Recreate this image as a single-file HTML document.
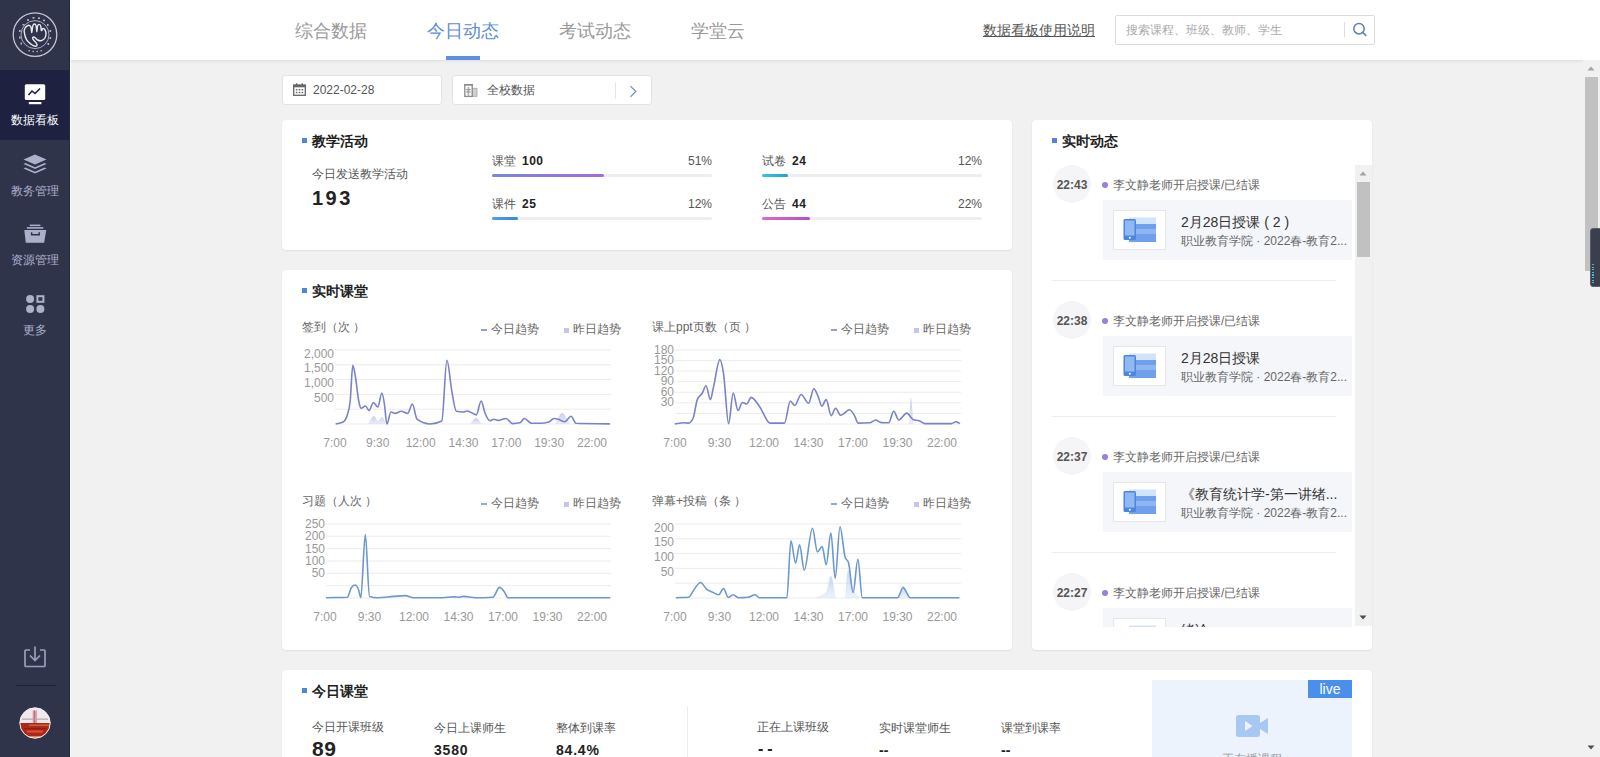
<!DOCTYPE html>
<html><head><meta charset="utf-8">
<style>
*{margin:0;padding:0;box-sizing:border-box}
html,body{width:1600px;height:757px;overflow:hidden;background:#f1f1f1;font-family:"Liberation Sans",sans-serif;color:#333}
.a{position:absolute;white-space:nowrap}
#side{position:absolute;left:0;top:0;width:70px;height:757px;background:#30344b}
#side .act{position:absolute;left:0;top:70px;width:70px;height:70px;background:#1e2240}
.snav{position:absolute;left:0;width:70px;text-align:center;font-size:12px;line-height:14px;color:#adb0cb}
#hdr{position:absolute;left:70px;top:0;width:1530px;height:60px;background:#fff;box-shadow:0 1px 3px rgba(0,0,0,.09)}
.tab{position:absolute;top:20px;font-size:18px;line-height:22px;color:#999}
.card{position:absolute;background:#fff;border-radius:4px;box-shadow:0 1px 2px rgba(0,0,0,.07),0 0 1px rgba(0,0,0,.05)}
.ttl{position:absolute;font-size:14px;line-height:16px;font-weight:bold;color:#222}
.blt{position:absolute;width:5px;height:5px;background:#4f86d6}
.lbl{font-size:12px;line-height:14px;color:#555}
.bar{position:absolute;height:3px;background:#eee;border-radius:2px}
.bar i{position:absolute;left:0;top:0;height:3px;border-radius:2px}
.ct{font-size:12px;line-height:14px;color:#666}
.leg{font-size:12px;line-height:14px;color:#666}
.ylab{font-size:12px;line-height:12px;color:#999;text-align:right}
.xlab{font-size:12px;line-height:12px;color:#999}
.tm{position:absolute;width:38px;height:38px;border-radius:50%;background:#f5f5f8;font-size:12px;font-weight:bold;color:#555;text-align:center;line-height:40px}
.dot{position:absolute;width:6px;height:6px;border-radius:50%;background:#9a7fdb}
.itm{position:absolute;width:249px;height:60px;background:#f5f6fa}
.thumb{position:absolute;left:10px;top:10px;width:53px;height:40px;background:#fff;border:1px solid #e6e6e6}
.it1{position:absolute;left:78px;top:14px;font-size:14px;line-height:16px;color:#333}
.it2{position:absolute;left:78px;top:33.5px;font-size:12px;line-height:14px;color:#666}
.stl{font-size:12px;line-height:14px;color:#555}
.sv{font-weight:bold;color:#222}
</style></head><body>

<!-- SIDEBAR -->
<div id="side">
  <svg class="a" style="left:12px;top:12px" width="46" height="46" viewBox="0 0 46 46">
    <circle cx="23" cy="22.6" r="21.8" fill="none" stroke="#c4c6d4" stroke-width="1.3"/>
    <circle cx="23" cy="22.6" r="14" fill="none" stroke="#b9bccb" stroke-width="0.9"/>
    <path d="M12.2,19.8 C11.9,17.9 12.4,17.5 12.9,16.5 C13.4,15.5 14.5,14.4 15.2,13.9 C15.9,13.4 16.6,13.1 17.2,13.3 C17.8,13.5 18.6,14.0 19.0,15.2 C19.4,16.4 19.5,20.7 19.8,20.5 C20.1,20.3 20.4,15.3 20.8,13.9 C21.2,12.5 21.8,12.0 22.4,12.0 C22.9,12.0 23.7,12.6 24.1,13.9 C24.5,15.2 24.6,19.8 24.8,19.8 C25.1,19.8 25.2,15.1 25.6,13.9 C26.0,12.7 26.6,12.4 27.1,12.4 C27.6,12.4 28.3,12.9 28.7,13.9 C29.1,14.9 29.0,18.1 29.4,18.5 C29.8,18.9 30.4,16.6 31.0,16.5 C31.6,16.4 32.5,16.9 33.0,17.8 C33.5,18.7 34.0,20.4 34.0,21.8 C34.0,23.2 33.5,25.2 32.7,26.4 C31.9,27.5 30.2,28.4 29.0,28.7 C27.8,29.0 26.7,28.5 25.7,28.0 C24.7,27.5 23.9,26.2 23.1,25.7 C22.3,25.2 21.5,24.9 21.1,25.1 C20.7,25.3 20.4,26.1 20.8,27.0 C21.2,27.9 23.1,29.4 23.8,30.4 C24.5,31.4 25.2,32.4 25.1,33.0 C25.0,33.6 24.1,34.4 23.1,34.3 C22.1,34.2 20.5,33.4 19.1,32.3 C17.7,31.2 15.7,29.8 14.5,27.7 C13.3,25.6 12.5,21.7 12.2,19.8Z" fill="none" stroke="#e9eaf0" stroke-width="1.4" stroke-linejoin="round"/>
    
    <g fill="#b4b7c8"><rect x="10.5" y="12" width="2" height="1.6"/><rect x="15" y="7.2" width="2" height="1.6"/><rect x="20.5" y="5" width="2" height="1.6"/><rect x="26" y="5.4" width="2" height="1.6"/><rect x="31" y="7.6" width="2" height="1.6"/><rect x="35" y="12" width="1.6" height="2"/><rect x="37.5" y="18" width="1.6" height="2"/><rect x="37.5" y="25" width="1.6" height="2"/><rect x="35.5" y="31" width="1.6" height="2"/><rect x="7" y="18" width="1.6" height="2"/><rect x="7" y="24.5" width="1.6" height="2"/><rect x="8.5" y="30.5" width="1.6" height="2"/><rect x="16.5" y="38" width="1.4" height="1.4"/><rect x="20.5" y="38.8" width="1.4" height="1.4"/><rect x="24.5" y="38.8" width="1.4" height="1.4"/><rect x="28.5" y="38" width="1.4" height="1.4"/></g>
  </svg>
  <div class="act"></div>
  <svg class="a" style="left:24px;top:84px" width="22" height="21" viewBox="0 0 22 21">
    <rect x="0.8" y="0.2" width="20.4" height="15.8" rx="1.5" fill="#fff"/>
    <path d="M4.5,11 L8,7 L11,9.5 L16,4.5" fill="none" stroke="#1e2240" stroke-width="1.6"/>
    <rect x="4.8" y="18" width="12.6" height="2.2" fill="#fff"/>
  </svg>
  <div class="snav" style="top:113px;color:#fff">数据看板</div>

  <svg class="a" style="left:23px;top:154px" width="24" height="20" viewBox="0 0 24 20">
    <path d="M12,0.5 L23.5,5.5 L12,10.5 L0.5,5.5 Z" fill="#adb0cb"/>
    <path d="M2.5,9 L12,13.2 L21.5,9 L23.5,10 L12,15 L0.5,10 Z" fill="#adb0cb"/>
    <path d="M2.5,13.5 L12,17.7 L21.5,13.5 L23.5,14.5 L12,19.5 L0.5,14.5 Z" fill="#adb0cb"/>
  </svg>
  <div class="snav" style="top:184px">教务管理</div>

  <svg class="a" style="left:24px;top:224px" width="23" height="20" viewBox="0 0 23 20">
    <rect x="5.8" y="0.6" width="10.6" height="1.5" fill="#adb0cb"/>
    <rect x="2.9" y="3.1" width="16.4" height="1.6" fill="#adb0cb"/>
    <path d="M0.3,6.1 L22.3,6.1 L20.1,18.8 L1.8,18.8 Z" fill="#adb0cb"/>
    <path d="M7.6,8.3 L7.6,10.7 L15.2,10.7 L15.2,8.3" fill="none" stroke="#30344b" stroke-width="1.5"/>
  </svg>
  <div class="snav" style="top:253px">资源管理</div>

  <svg class="a" style="left:25px;top:294px" width="21" height="21" viewBox="0 0 21 21">
    <circle cx="5.1" cy="5" r="4" fill="#adb0cb"/>
    <rect x="11.4" y="1.2" width="8" height="7.6" fill="#adb0cb"/>
    <rect x="13.4" y="3.2" width="4" height="3.6" fill="#30344b"/>
    <circle cx="5.1" cy="15.1" r="4" fill="#adb0cb"/>
    <circle cx="15.4" cy="15.1" r="4" fill="#adb0cb"/>
  </svg>
  <div class="snav" style="top:323px">更多</div>

  <svg class="a" style="left:24px;top:646px" width="22" height="22" viewBox="0 0 22 22">
    <path d="M6,4 L2,4 Q1,4 1,5 L1,19.5 Q1,20.5 2,20.5 L20,20.5 Q21,20.5 21,19.5 L21,5 Q21,4 20,4 L16,4" fill="none" stroke="#9a9ebb" stroke-width="1.7"/>
    <path d="M11,0.5 L11,14 M6,9.5 L11,14.5 L16,9.5" fill="none" stroke="#9a9ebb" stroke-width="1.7"/>
  </svg>
  <div class="a" style="left:16px;top:685px;width:40px;height:1px;background:#1f2338"></div>
  <svg class="a" style="left:19px;top:707px" width="32" height="32" viewBox="0 0 32 32">
    <defs><clipPath id="av"><circle cx="16" cy="16" r="15.2"/></clipPath></defs>
    <g clip-path="url(#av)">
      <rect width="32" height="32" fill="#efe9ec"/>
      <rect x="3" y="11.5" width="26" height="1.3" fill="#b7acb0"/>
      <rect x="13.7" y="3.5" width="4.3" height="13" fill="#d9a0aa"/>
      <rect x="14.8" y="3.5" width="1.2" height="13" fill="#c0707e"/>
      <rect y="16" width="32" height="16" fill="#ad2818"/>
      <rect x="10" y="17.5" width="20" height="1.6" fill="#c0683a"/>
      <rect x="5" y="21" width="22" height="1.2" fill="#8e1e12"/>
      <rect x="8" y="23.5" width="16" height="2" fill="#e0503a"/>
      <rect y="29" width="32" height="3" fill="#d88a5a"/>
    </g>
    <circle cx="16" cy="16" r="15.2" fill="none" stroke="#f4eef0" stroke-width="1"/>
  </svg>
</div>

<div class="a" style="left:69px;top:0;width:1px;height:757px;background:#262a40"></div>
<div class="a" style="left:70px;top:60px;width:1px;height:697px;background:#f9f9f9"></div>
<!-- HEADER -->
<div id="hdr"></div>
<div class="tab" style="left:295px">综合数据</div>
<div class="tab" style="left:427px;color:#5b8cd8">今日动态</div>
<div class="a" style="left:446px;top:56px;width:34px;height:4px;background:#5b8fe0"></div>
<div class="tab" style="left:559px">考试动态</div>
<div class="tab" style="left:691px">学堂云</div>
<div class="a" style="left:983px;top:22px;font-size:14px;line-height:16px;color:#555;text-decoration:underline">数据看板使用说明</div>
<div class="a" style="left:1115px;top:15px;width:260px;height:30px;border:1px solid #dcdcdc;border-radius:2px;background:#fff"></div>
<div class="a" style="left:1126px;top:23px;font-size:12px;line-height:14px;color:#aaa">搜索课程、班级、教师、学生</div>
<div class="a" style="left:1344px;top:22px;width:1px;height:15px;background:#ddd"></div>
<svg class="a" style="left:1352px;top:22px" width="16" height="16" viewBox="0 0 16 16">
  <circle cx="7" cy="6.7" r="5.2" fill="none" stroke="#5c80ad" stroke-width="1.5"/>
  <path d="M10.8,10.5 L14.3,13.9" stroke="#5c80ad" stroke-width="1.6"/>
</svg>

<!-- FILTERS -->
<div class="a" style="left:282px;top:75px;width:160px;height:30px;border:1px solid #e3e3e3;border-radius:3px;background:#fff"></div>
<svg class="a" style="left:293px;top:83px" width="13" height="13" viewBox="0 0 13 13">
  <rect x="0.7" y="2" width="11.6" height="10.3" fill="none" stroke="#666" stroke-width="1.3"/>
  <rect x="0.7" y="2" width="11.6" height="2.3" fill="#666"/>
  <rect x="3" y="0.3" width="1.4" height="3" fill="#666"/><rect x="8.6" y="0.3" width="1.4" height="3" fill="#666"/>
  <g fill="#666"><rect x="2.8" y="6" width="1.6" height="1.4"/><rect x="5.7" y="6" width="1.6" height="1.4"/><rect x="8.6" y="6" width="1.6" height="1.4"/><rect x="2.8" y="8.8" width="1.6" height="1.4"/><rect x="5.7" y="8.8" width="1.6" height="1.4"/><rect x="8.6" y="8.8" width="1.6" height="1.4"/></g>
</svg>
<div class="a" style="left:313px;top:83px;font-size:12px;line-height:14px;color:#555">2022-02-28</div>
<div class="a" style="left:452px;top:75px;width:200px;height:30px;border:1px solid #e3e3e3;border-radius:3px;background:#fff"></div>
<svg class="a" style="left:463px;top:83px" width="15" height="15" viewBox="0 0 15 15">
  <rect x="9" y="5.3" width="5" height="8" fill="#d0d0d0" stroke="#aaa" stroke-width="0.9"/>
  <rect x="1.8" y="1.6" width="7.4" height="11.8" fill="#fff" stroke="#8a8a8a" stroke-width="1.3"/>
  <rect x="1.2" y="1" width="8.6" height="1.6" fill="#8a8a8a"/>
  <rect x="4.6" y="4" width="1.6" height="9.4" fill="#b0b0b0"/>
  <rect x="3.2" y="6" width="4.4" height="1.2" fill="#999"/>
  <rect x="3.2" y="8.3" width="4.4" height="1.2" fill="#999"/>
</svg>
<div class="a" style="left:487px;top:83px;font-size:12px;line-height:14px;color:#555">全校数据</div>
<div class="a" style="left:615px;top:82px;width:1px;height:17px;background:#e5e5e5"></div>
<svg class="a" style="left:629px;top:85px" width="9" height="13" viewBox="0 0 9 13">
  <path d="M1.5,1.2 L6.8,6.5 L1.5,11.8" fill="none" stroke="#6a8ad0" stroke-width="1.2"/>
</svg>

<!-- CARD: 教学活动 -->
<div class="card" style="left:282px;top:120px;width:730px;height:130px"></div>
<div class="blt" style="left:302px;top:138px"></div>
<div class="ttl" style="left:312px;top:133px">教学活动</div>
<div class="a lbl" style="left:312px;top:167px">今日发送教学活动</div>
<div class="a" style="left:312px;top:187px;font-size:20px;line-height:22px;font-weight:bold;color:#222;letter-spacing:2.5px">193</div>

<div class="a lbl" style="left:492px;top:154px">课堂<b style="color:#222;margin-left:6px;letter-spacing:0.5px">100</b></div>
<div class="a lbl" style="left:682px;top:154px;width:30px;text-align:right">51%</div>
<div class="bar" style="left:492px;top:174px;width:220px"><i style="width:112px;background:linear-gradient(90deg,#7a86d8,#a36ae0)"></i></div>
<div class="a lbl" style="left:492px;top:197px">课件<b style="color:#222;margin-left:6px;letter-spacing:0.5px">25</b></div>
<div class="a lbl" style="left:682px;top:197px;width:30px;text-align:right">12%</div>
<div class="bar" style="left:492px;top:217px;width:220px"><i style="width:26px;background:linear-gradient(90deg,#4aa3e6,#3a86d9)"></i></div>

<div class="a lbl" style="left:762px;top:154px">试卷<b style="color:#222;margin-left:6px;letter-spacing:0.5px">24</b></div>
<div class="a lbl" style="left:952px;top:154px;width:30px;text-align:right">12%</div>
<div class="bar" style="left:762px;top:174px;width:220px"><i style="width:26px;background:linear-gradient(90deg,#3fc2d8,#2b9dcc)"></i></div>
<div class="a lbl" style="left:762px;top:197px">公告<b style="color:#222;margin-left:6px;letter-spacing:0.5px">44</b></div>
<div class="a lbl" style="left:952px;top:197px;width:30px;text-align:right">22%</div>
<div class="bar" style="left:762px;top:217px;width:220px"><i style="width:48px;background:linear-gradient(90deg,#e06bbf,#b14fd4)"></i></div>

<!-- CARD: 实时课堂 -->
<div class="card" style="left:282px;top:270px;width:730px;height:380px"></div>
<div class="blt" style="left:302px;top:288px"></div>
<div class="ttl" style="left:312px;top:283px">实时课堂</div>
<div class="a ct" style="left:302px;top:320px">签到（次 ）</div>
<div class="a" style="left:481px;top:329px;width:6px;height:2px;background:#7a82c8;opacity:.8"></div>
<div class="a leg" style="left:491px;top:322px">今日趋势</div>
<div class="a" style="left:564px;top:328px;width:5px;height:5px;background:#c3c7e6"></div>
<div class="a leg" style="left:573px;top:322px">昨日趋势</div>
<svg class="a" style="left:0;top:0" width="1600" height="757"><defs><linearGradient id="gc1" x1="0" y1="0" x2="0" y2="1"><stop offset="0" stop-color="#b9bde8" stop-opacity=".75"/><stop offset="1" stop-color="#b9bde8" stop-opacity=".25"/></linearGradient></defs><line x1="335.0" y1="350.0" x2="611.0" y2="350.0" stroke="#ececec" stroke-width="1"/><line x1="335.0" y1="364.8" x2="611.0" y2="364.8" stroke="#ececec" stroke-width="1"/><line x1="335.0" y1="379.6" x2="611.0" y2="379.6" stroke="#ececec" stroke-width="1"/><line x1="335.0" y1="394.4" x2="611.0" y2="394.4" stroke="#ececec" stroke-width="1"/><line x1="335.0" y1="409.2" x2="611.0" y2="409.2" stroke="#ececec" stroke-width="1"/><line x1="335.0" y1="424.0" x2="611.0" y2="424.0" stroke="#ececec" stroke-width="1"/><path d="M368.0,424.0 C370.0,421.3 372.0,416.0 374.0,416.0 C375.3,416.0 376.7,421.0 378.0,421.0 C379.3,421.0 380.7,417.0 382.0,417.0 C383.3,417.0 384.7,421.7 386.0,424.0" fill="url(#gc1)"/><path d="M470.0,424.0 C472.0,422.0 474.0,418.0 476.0,418.0 C478.0,418.0 480.0,422.0 482.0,424.0" fill="url(#gc1)"/><path d="M555.0,424.0 C557.3,420.3 559.7,413.0 562.0,413.0 C564.7,413.0 567.3,420.3 570.0,424.0" fill="url(#gc1)"/><path d="M335.7,424.0 C338.1,423.3 340.6,423.3 343.0,422.0 C344.4,421.2 345.9,419.6 347.3,414.9 C348.3,411.7 349.2,410.2 350.2,401.0 C351.1,392.8 351.9,365.4 352.8,365.4 C353.6,365.4 354.5,371.5 355.3,376.0 C356.5,382.7 357.8,397.1 359.0,402.5 C359.7,405.5 360.4,408.3 361.1,408.3 C362.6,408.3 364.0,406.0 365.5,406.0 C366.7,406.0 367.8,410.5 369.0,410.5 C370.5,410.5 372.0,402.5 373.5,402.5 C374.9,402.5 376.4,407.0 377.8,407.0 C379.2,407.0 380.5,393.0 381.9,393.0 C382.7,393.0 383.6,398.8 384.4,404.0 C385.2,409.2 386.1,424.0 386.9,424.0 C388.3,424.0 389.6,412.0 391.0,412.0 C392.4,412.0 393.9,413.4 395.3,413.4 C397.2,413.4 399.2,411.2 401.1,411.2 C403.3,411.2 405.4,413.4 407.6,413.4 C409.2,413.4 410.8,404.0 412.4,404.0 C413.9,404.0 415.5,418.1 417.0,419.2 C421.4,422.4 425.8,424.0 430.2,424.0 C434.1,424.0 437.9,423.0 441.8,421.0 C443.5,420.1 445.2,360.3 446.9,360.3 C448.6,360.3 450.3,383.4 452.0,392.3 C453.4,399.8 454.9,410.9 456.3,411.2 C458.5,411.7 460.8,412.0 463.0,412.0 C464.5,412.0 465.9,411.0 467.4,411.0 C470.3,411.0 473.3,414.9 476.2,414.9 C477.9,414.9 479.5,401.0 481.2,401.0 C482.4,401.0 483.7,409.6 484.9,412.7 C486.6,416.9 488.3,420.7 490.0,420.7 C491.2,420.7 492.4,419.2 493.6,419.2 C495.1,419.2 496.5,420.4 498.0,420.4 C500.7,420.4 503.3,418.5 506.0,418.5 C508.2,418.5 510.3,423.6 512.5,423.6 C514.9,423.6 517.4,423.3 519.8,422.8 C521.3,422.5 522.9,418.5 524.4,418.5 C526.7,418.5 529.1,423.3 531.4,423.3 C534.3,423.3 537.2,423.3 540.1,423.3 C543.0,423.3 545.9,422.9 548.8,422.1 C550.5,421.6 552.2,418.5 553.9,418.5 C555.4,418.5 556.8,418.8 558.3,419.2 C560.5,419.8 562.6,421.8 564.8,421.8 C566.9,421.8 568.9,416.3 571.0,416.3 C572.7,416.3 574.5,423.2 576.2,423.3 C587.4,423.7 598.7,423.7 609.9,423.9" fill="none" stroke="#7a82c8" stroke-width="1.6" stroke-linejoin="round"/></svg>
<div class="a ylab" style="left:294px;top:347.5px;width:40px">2,000</div>
<div class="a ylab" style="left:294px;top:362.3px;width:40px">1,500</div>
<div class="a ylab" style="left:294px;top:377.1px;width:40px">1,000</div>
<div class="a ylab" style="left:294px;top:391.9px;width:40px">500</div>
<div class="a xlab" style="left:335.0px;top:437px;width:40px;margin-left:-20px;text-align:center">7:00</div>
<div class="a xlab" style="left:377.8px;top:437px;width:40px;margin-left:-20px;text-align:center">9:30</div>
<div class="a xlab" style="left:420.7px;top:437px;width:40px;margin-left:-20px;text-align:center">12:00</div>
<div class="a xlab" style="left:463.5px;top:437px;width:40px;margin-left:-20px;text-align:center">14:30</div>
<div class="a xlab" style="left:506.3px;top:437px;width:40px;margin-left:-20px;text-align:center">17:00</div>
<div class="a xlab" style="left:549.2px;top:437px;width:40px;margin-left:-20px;text-align:center">19:30</div>
<div class="a xlab" style="left:592.0px;top:437px;width:40px;margin-left:-20px;text-align:center">22:00</div>
<div class="a ct" style="left:652px;top:320px">课上ppt页数（页 ）</div>
<div class="a" style="left:831px;top:329px;width:6px;height:2px;background:#7a82c8;opacity:.8"></div>
<div class="a leg" style="left:841px;top:322px">今日趋势</div>
<div class="a" style="left:914px;top:328px;width:5px;height:5px;background:#c3c7e6"></div>
<div class="a leg" style="left:923px;top:322px">昨日趋势</div>
<svg class="a" style="left:0;top:0" width="1600" height="757"><defs><linearGradient id="gc2" x1="0" y1="0" x2="0" y2="1"><stop offset="0" stop-color="#b9bde8" stop-opacity=".75"/><stop offset="1" stop-color="#b9bde8" stop-opacity=".25"/></linearGradient></defs><line x1="675.0" y1="350.0" x2="961.0" y2="350.0" stroke="#ececec" stroke-width="1"/><line x1="675.0" y1="360.6" x2="961.0" y2="360.6" stroke="#ececec" stroke-width="1"/><line x1="675.0" y1="371.1" x2="961.0" y2="371.1" stroke="#ececec" stroke-width="1"/><line x1="675.0" y1="381.7" x2="961.0" y2="381.7" stroke="#ececec" stroke-width="1"/><line x1="675.0" y1="392.3" x2="961.0" y2="392.3" stroke="#ececec" stroke-width="1"/><line x1="675.0" y1="402.9" x2="961.0" y2="402.9" stroke="#ececec" stroke-width="1"/><line x1="675.0" y1="413.4" x2="961.0" y2="413.4" stroke="#ececec" stroke-width="1"/><line x1="675.0" y1="424.0" x2="961.0" y2="424.0" stroke="#ececec" stroke-width="1"/><path d="M909.0,424.0 C909.7,415.3 910.3,398.0 911.0,398.0 C911.8,398.0 912.7,415.3 913.5,424.0" fill="url(#gc2)"/><path d="M674.8,424.0 C677.7,423.6 680.6,422.8 683.5,422.8 C685.2,422.8 686.9,423.1 688.6,423.1 C690.1,423.1 691.5,421.6 693.0,418.5 C694.4,415.5 695.9,403.3 697.3,399.6 C699.0,395.2 700.7,395.9 702.4,393.0 C703.6,391.0 704.8,385.8 706.0,385.8 C707.5,385.8 708.9,399.6 710.4,399.6 C711.4,399.6 712.3,392.0 713.3,388.0 C715.5,379.0 717.7,359.6 719.9,359.6 C721.1,359.6 722.3,365.8 723.5,373.4 C725.2,384.1 726.9,423.6 728.6,423.6 C730.1,423.6 731.7,393.0 733.2,393.0 C734.8,393.0 736.4,410.5 738.0,410.5 C739.5,410.5 740.9,402.5 742.4,402.5 C743.8,402.5 745.3,404.0 746.7,404.0 C748.2,404.0 749.6,397.4 751.1,397.4 C754.0,397.4 756.9,403.1 759.8,406.9 C763.2,411.4 766.6,423.1 770.0,423.1 C774.8,423.1 779.7,423.1 784.5,423.1 C786.4,423.1 788.4,401.0 790.3,401.0 C791.8,401.0 793.2,405.4 794.7,405.4 C796.9,405.4 799.0,394.5 801.2,394.5 C803.7,394.5 806.1,403.2 808.6,403.2 C810.3,403.2 812.1,388.7 813.8,388.7 C815.3,388.7 816.7,393.4 818.2,396.7 C819.4,399.4 820.6,406.1 821.8,406.1 C823.3,406.1 824.7,399.6 826.2,399.6 C827.9,399.6 829.5,415.6 831.2,415.6 C832.7,415.6 834.1,408.3 835.6,408.3 C837.3,408.3 839.0,415.3 840.7,415.3 C843.6,415.3 846.5,409.8 849.4,409.8 C851.1,409.8 852.8,412.7 854.5,415.6 C855.7,417.6 856.9,423.1 858.1,423.1 C862.0,423.1 865.9,423.0 869.8,422.8 C871.7,422.7 873.7,420.0 875.6,420.0 C877.5,420.0 879.5,422.5 881.4,422.6 C883.8,422.7 886.3,422.8 888.7,422.8 C890.4,422.8 892.0,411.2 893.7,411.2 C895.4,411.2 897.1,420.0 898.8,420.0 C901.5,420.0 904.1,413.1 906.8,413.1 C909.0,413.1 911.2,418.9 913.4,419.7 C915.3,420.4 917.3,420.0 919.2,420.7 C921.1,421.3 923.1,423.6 925.0,423.6 C933.7,423.6 942.5,423.6 951.2,423.6 C952.9,423.6 954.6,421.7 956.3,421.7 C957.5,421.7 958.7,423.0 959.9,423.6" fill="none" stroke="#7a82c8" stroke-width="1.6" stroke-linejoin="round"/></svg>
<div class="a ylab" style="left:634px;top:343.5px;width:40px">180</div>
<div class="a ylab" style="left:634px;top:354.1px;width:40px">150</div>
<div class="a ylab" style="left:634px;top:364.6px;width:40px">120</div>
<div class="a ylab" style="left:634px;top:375.2px;width:40px">90</div>
<div class="a ylab" style="left:634px;top:385.8px;width:40px">60</div>
<div class="a ylab" style="left:634px;top:396.4px;width:40px">30</div>
<div class="a xlab" style="left:675.0px;top:437px;width:40px;margin-left:-20px;text-align:center">7:00</div>
<div class="a xlab" style="left:719.5px;top:437px;width:40px;margin-left:-20px;text-align:center">9:30</div>
<div class="a xlab" style="left:764.0px;top:437px;width:40px;margin-left:-20px;text-align:center">12:00</div>
<div class="a xlab" style="left:808.5px;top:437px;width:40px;margin-left:-20px;text-align:center">14:30</div>
<div class="a xlab" style="left:853.0px;top:437px;width:40px;margin-left:-20px;text-align:center">17:00</div>
<div class="a xlab" style="left:897.5px;top:437px;width:40px;margin-left:-20px;text-align:center">19:30</div>
<div class="a xlab" style="left:942.0px;top:437px;width:40px;margin-left:-20px;text-align:center">22:00</div>
<div class="a ct" style="left:302px;top:494px">习题（人次 ）</div>
<div class="a" style="left:481px;top:503px;width:6px;height:2px;background:#6c98d0;opacity:.8"></div>
<div class="a leg" style="left:491px;top:496px">今日趋势</div>
<div class="a" style="left:564px;top:502px;width:5px;height:5px;background:#c3c7e6"></div>
<div class="a leg" style="left:573px;top:496px">昨日趋势</div>
<svg class="a" style="left:0;top:0" width="1600" height="757"><defs><linearGradient id="gc3" x1="0" y1="0" x2="0" y2="1"><stop offset="0" stop-color="#b6cdee" stop-opacity=".75"/><stop offset="1" stop-color="#b6cdee" stop-opacity=".25"/></linearGradient></defs><line x1="326.0" y1="524.0" x2="611.0" y2="524.0" stroke="#ececec" stroke-width="1"/><line x1="326.0" y1="536.3" x2="611.0" y2="536.3" stroke="#ececec" stroke-width="1"/><line x1="326.0" y1="548.7" x2="611.0" y2="548.7" stroke="#ececec" stroke-width="1"/><line x1="326.0" y1="561.0" x2="611.0" y2="561.0" stroke="#ececec" stroke-width="1"/><line x1="326.0" y1="573.3" x2="611.0" y2="573.3" stroke="#ececec" stroke-width="1"/><line x1="326.0" y1="585.7" x2="611.0" y2="585.7" stroke="#ececec" stroke-width="1"/><line x1="326.0" y1="598.0" x2="611.0" y2="598.0" stroke="#ececec" stroke-width="1"/><path d="M325.9,597.7 C333.0,597.5 340.2,597.5 347.3,597.2 C348.6,597.1 350.0,589.6 351.3,587.7 C352.5,585.9 353.8,585.0 355.0,585.0 C356.1,585.0 357.3,586.4 358.4,589.3 C359.2,591.3 360.0,597.7 360.8,597.7 C362.3,597.7 363.8,534.6 365.3,534.6 C366.7,534.6 368.1,595.9 369.5,596.4 C372.2,597.3 374.8,597.7 377.5,597.7 C382.8,597.7 388.0,596.8 393.3,596.4 C397.3,596.1 401.2,595.6 405.2,595.6 C408.1,595.6 411.0,597.7 413.9,597.7 C423.4,597.7 433.0,597.7 442.5,597.7 C446.2,597.7 449.9,596.9 453.6,596.9 C455.6,596.9 457.5,597.2 459.5,597.2 C460.8,597.2 462.2,596.4 463.5,596.4 C467.5,596.4 471.4,597.7 475.4,597.7 C481.2,597.7 487.0,597.5 492.8,597.2 C495.0,597.1 497.3,587.4 499.5,587.4 C501.2,587.4 503.0,590.1 504.7,592.5 C505.8,594.0 506.8,597.7 507.9,597.7 C542.0,597.7 576.1,597.7 610.2,597.7" fill="none" stroke="#6c98d0" stroke-width="1.6" stroke-linejoin="round"/></svg>
<div class="a ylab" style="left:285px;top:518.0px;width:40px">250</div>
<div class="a ylab" style="left:285px;top:530.3px;width:40px">200</div>
<div class="a ylab" style="left:285px;top:542.7px;width:40px">150</div>
<div class="a ylab" style="left:285px;top:555.0px;width:40px">100</div>
<div class="a ylab" style="left:285px;top:567.3px;width:40px">50</div>
<div class="a xlab" style="left:325.0px;top:611px;width:40px;margin-left:-20px;text-align:center">7:00</div>
<div class="a xlab" style="left:369.5px;top:611px;width:40px;margin-left:-20px;text-align:center">9:30</div>
<div class="a xlab" style="left:414.0px;top:611px;width:40px;margin-left:-20px;text-align:center">12:00</div>
<div class="a xlab" style="left:458.5px;top:611px;width:40px;margin-left:-20px;text-align:center">14:30</div>
<div class="a xlab" style="left:503.0px;top:611px;width:40px;margin-left:-20px;text-align:center">17:00</div>
<div class="a xlab" style="left:547.5px;top:611px;width:40px;margin-left:-20px;text-align:center">19:30</div>
<div class="a xlab" style="left:592.0px;top:611px;width:40px;margin-left:-20px;text-align:center">22:00</div>
<div class="a ct" style="left:652px;top:494px">弹幕+投稿（条 ）</div>
<div class="a" style="left:831px;top:503px;width:6px;height:2px;background:#6c98d0;opacity:.8"></div>
<div class="a leg" style="left:841px;top:496px">今日趋势</div>
<div class="a" style="left:914px;top:502px;width:5px;height:5px;background:#c3c7e6"></div>
<div class="a leg" style="left:923px;top:496px">昨日趋势</div>
<svg class="a" style="left:0;top:0" width="1600" height="757"><defs><linearGradient id="gc4" x1="0" y1="0" x2="0" y2="1"><stop offset="0" stop-color="#b6cdee" stop-opacity=".75"/><stop offset="1" stop-color="#b6cdee" stop-opacity=".25"/></linearGradient></defs><line x1="675.0" y1="524.0" x2="961.0" y2="524.0" stroke="#ececec" stroke-width="1"/><line x1="675.0" y1="538.8" x2="961.0" y2="538.8" stroke="#ececec" stroke-width="1"/><line x1="675.0" y1="553.6" x2="961.0" y2="553.6" stroke="#ececec" stroke-width="1"/><line x1="675.0" y1="568.4" x2="961.0" y2="568.4" stroke="#ececec" stroke-width="1"/><line x1="675.0" y1="583.2" x2="961.0" y2="583.2" stroke="#ececec" stroke-width="1"/><line x1="675.0" y1="598.0" x2="961.0" y2="598.0" stroke="#ececec" stroke-width="1"/><path d="M815.0,598.0 C818.7,596.0 822.3,596.0 826.0,592.0 C827.7,590.2 829.3,576.0 831.0,576.0 C832.7,576.0 834.3,590.7 836.0,598.0" fill="url(#gc4)"/><path d="M845.0,598.0 C846.0,588.7 847.0,570.0 848.0,570.0 C849.7,570.0 851.3,583.5 853.0,588.0 C855.3,594.3 857.7,594.7 860.0,598.0" fill="url(#gc4)"/><path d="M898.0,598.0 C899.7,594.0 901.3,586.0 903.0,586.0 C905.0,586.0 907.0,594.0 909.0,598.0" fill="url(#gc4)"/><path d="M675.9,597.7 C680.1,597.5 684.4,597.5 688.6,597.2 C690.5,597.1 692.3,591.6 694.2,589.3 C696.3,586.7 698.4,582.5 700.5,582.5 C702.6,582.5 704.7,587.7 706.8,589.3 C708.4,590.5 710.0,590.9 711.6,591.7 C714.0,592.8 716.3,594.8 718.7,594.8 C720.3,594.8 721.9,588.5 723.5,588.5 C725.1,588.5 726.7,597.5 728.3,597.5 C729.9,597.5 731.4,594.8 733.0,594.8 C734.9,594.8 736.7,597.7 738.6,597.7 C741.8,597.7 744.9,597.5 748.1,597.2 C750.5,597.0 752.8,594.8 755.2,594.8 C756.5,594.8 757.9,597.7 759.2,597.7 C768.4,597.7 777.7,597.7 786.9,597.7 C788.2,597.7 789.6,540.9 790.9,540.9 C792.5,540.9 794.0,563.1 795.6,563.1 C796.9,563.1 798.3,544.9 799.6,544.9 C801.1,544.9 802.7,570.2 804.2,570.2 C807.0,570.2 809.7,528.2 812.5,528.2 C814.1,528.2 815.8,552.0 817.4,552.0 C819.0,552.0 820.6,546.5 822.2,546.5 C823.5,546.5 824.9,564.7 826.2,564.7 C827.8,564.7 829.3,533.0 830.9,533.0 C832.3,533.0 833.8,578.2 835.2,578.2 C836.8,578.2 838.4,526.7 840.0,526.7 C841.7,526.7 843.5,552.5 845.2,557.6 C846.3,560.7 847.3,559.2 848.4,562.3 C850.0,566.9 851.5,592.5 853.1,592.5 C854.7,592.5 856.3,559.2 857.9,559.2 C859.4,559.2 860.8,597.7 862.3,597.7 C874.0,597.7 885.8,597.7 897.5,597.7 C899.4,597.7 901.2,587.7 903.1,587.7 C905.5,587.7 907.8,597.7 910.2,597.7 C926.6,597.7 943.0,597.7 959.4,597.7" fill="none" stroke="#6c98d0" stroke-width="1.6" stroke-linejoin="round"/></svg>
<div class="a ylab" style="left:634px;top:521.5px;width:40px">200</div>
<div class="a ylab" style="left:634px;top:536.3px;width:40px">150</div>
<div class="a ylab" style="left:634px;top:551.1px;width:40px">100</div>
<div class="a ylab" style="left:634px;top:565.9px;width:40px">50</div>
<div class="a xlab" style="left:675.0px;top:611px;width:40px;margin-left:-20px;text-align:center">7:00</div>
<div class="a xlab" style="left:719.5px;top:611px;width:40px;margin-left:-20px;text-align:center">9:30</div>
<div class="a xlab" style="left:764.0px;top:611px;width:40px;margin-left:-20px;text-align:center">12:00</div>
<div class="a xlab" style="left:808.5px;top:611px;width:40px;margin-left:-20px;text-align:center">14:30</div>
<div class="a xlab" style="left:853.0px;top:611px;width:40px;margin-left:-20px;text-align:center">17:00</div>
<div class="a xlab" style="left:897.5px;top:611px;width:40px;margin-left:-20px;text-align:center">19:30</div>
<div class="a xlab" style="left:942.0px;top:611px;width:40px;margin-left:-20px;text-align:center">22:00</div>

<!-- CARD: 实时动态 -->
<div class="card" style="left:1032px;top:120px;width:340px;height:530px"></div>
<div class="blt" style="left:1052px;top:138px"></div>
<div class="ttl" style="left:1062px;top:133px">实时动态</div>
<div class="a" style="left:1032px;top:165px;width:340px;height:462px;overflow:hidden">
<div class="tm" style="left:21px;top:0px">22:43</div>
<div class="dot" style="left:70px;top:17px"></div>
<div class="a" style="left:81px;top:13px;font-size:12px;line-height:14px;color:#666">李文静老师开启授课/已结课</div>
<div class="itm" style="left:71px;top:35px"><div class="thumb"><svg style="position:absolute;left:9px;top:5px" width="34" height="28" viewBox="0 0 34 28"><rect x="6" y="1.5" width="27" height="9" fill="#d3e3f9"/><rect x="6" y="8" width="27" height="18" fill="#6ea0ec"/><rect x="6" y="13" width="27" height="5" fill="#8fb6f0"/><rect x="0.5" y="3" width="12.5" height="21" rx="1.5" fill="#4d86e0"/><rect x="2" y="4.5" width="9.5" height="15" fill="#90b8f3"/><circle cx="6.8" cy="21.8" r="1" fill="#fff"/></svg></div><div class="it1">2月28日授课 ( 2 )</div><div class="it2">职业教育学院 · 2022春-教育2...</div></div>
<div class="a" style="left:20px;top:115px;width:284px;height:1px;background:#eee"></div>
<div class="tm" style="left:21px;top:136px">22:38</div>
<div class="dot" style="left:70px;top:153px"></div>
<div class="a" style="left:81px;top:149px;font-size:12px;line-height:14px;color:#666">李文静老师开启授课/已结课</div>
<div class="itm" style="left:71px;top:171px"><div class="thumb"><svg style="position:absolute;left:9px;top:5px" width="34" height="28" viewBox="0 0 34 28"><rect x="6" y="1.5" width="27" height="9" fill="#d3e3f9"/><rect x="6" y="8" width="27" height="18" fill="#6ea0ec"/><rect x="6" y="13" width="27" height="5" fill="#8fb6f0"/><rect x="0.5" y="3" width="12.5" height="21" rx="1.5" fill="#4d86e0"/><rect x="2" y="4.5" width="9.5" height="15" fill="#90b8f3"/><circle cx="6.8" cy="21.8" r="1" fill="#fff"/></svg></div><div class="it1">2月28日授课</div><div class="it2">职业教育学院 · 2022春-教育2...</div></div>
<div class="a" style="left:20px;top:251px;width:284px;height:1px;background:#eee"></div>
<div class="tm" style="left:21px;top:272px">22:37</div>
<div class="dot" style="left:70px;top:289px"></div>
<div class="a" style="left:81px;top:285px;font-size:12px;line-height:14px;color:#666">李文静老师开启授课/已结课</div>
<div class="itm" style="left:71px;top:307px"><div class="thumb"><svg style="position:absolute;left:9px;top:5px" width="34" height="28" viewBox="0 0 34 28"><rect x="6" y="1.5" width="27" height="9" fill="#d3e3f9"/><rect x="6" y="8" width="27" height="18" fill="#6ea0ec"/><rect x="6" y="13" width="27" height="5" fill="#8fb6f0"/><rect x="0.5" y="3" width="12.5" height="21" rx="1.5" fill="#4d86e0"/><rect x="2" y="4.5" width="9.5" height="15" fill="#90b8f3"/><circle cx="6.8" cy="21.8" r="1" fill="#fff"/></svg></div><div class="it1">《教育统计学-第一讲绪...</div><div class="it2">职业教育学院 · 2022春-教育2...</div></div>
<div class="a" style="left:20px;top:387px;width:284px;height:1px;background:#eee"></div>
<div class="tm" style="left:21px;top:408px">22:27</div>
<div class="dot" style="left:70px;top:425px"></div>
<div class="a" style="left:81px;top:421px;font-size:12px;line-height:14px;color:#666">李文静老师开启授课/已结课</div>
<div class="itm" style="left:71px;top:443px"><div class="thumb"><svg style="position:absolute;left:9px;top:5px" width="34" height="28" viewBox="0 0 34 28"><rect x="6" y="1.5" width="27" height="9" fill="#d3e3f9"/><rect x="6" y="8" width="27" height="18" fill="#6ea0ec"/><rect x="6" y="13" width="27" height="5" fill="#8fb6f0"/><rect x="0.5" y="3" width="12.5" height="21" rx="1.5" fill="#4d86e0"/><rect x="2" y="4.5" width="9.5" height="15" fill="#90b8f3"/><circle cx="6.8" cy="21.8" r="1" fill="#fff"/></svg></div><div class="it1">绪论</div><div class="it2">职业教育学院 · 2022春-教育2...</div></div>
<div class="a" style="left:20px;top:523px;width:284px;height:1px;background:#eee"></div>
</div>
<div class="a" style="left:1355px;top:165px;width:17px;height:461px;background:#f1f1f1"></div>
<svg class="a" style="left:1358px;top:170px" width="10" height="7" viewBox="0 0 10 7"><path d="M1.5,5.5 L5,1.5 L8.5,5.5 Z" fill="#a3a3a3"/></svg>
<div class="a" style="left:1357px;top:182px;width:13px;height:75px;background:#c1c1c1"></div>
<svg class="a" style="left:1358px;top:614px" width="10" height="7" viewBox="0 0 10 7"><path d="M1.5,1.5 L5,5.5 L8.5,1.5 Z" fill="#505050"/></svg>

<!-- CARD: 今日课堂 -->
<div class="card" style="left:282px;top:670px;width:1090px;height:120px"></div>
<div class="blt" style="left:302px;top:688px"></div>
<div class="ttl" style="left:312px;top:683px">今日课堂</div>
<div class="a stl" style="left:312px;top:720px">今日开课班级</div>
<div class="a sv" style="left:312px;top:738px;font-size:21px;line-height:22px;letter-spacing:0.5px">89</div>
<div class="a stl" style="left:434px;top:721px">今日上课师生</div>
<div class="a sv" style="left:434px;top:742px;font-size:14px;line-height:16px;letter-spacing:0.8px">3580</div>
<div class="a stl" style="left:556px;top:721px">整体到课率</div>
<div class="a sv" style="left:556px;top:742px;font-size:14px;line-height:16px;letter-spacing:0.8px">84.4%</div>
<div class="a" style="left:687px;top:706px;width:1px;height:51px;background:#eee"></div>
<div class="a stl" style="left:757px;top:720px">正在上课班级</div>
<div class="a sv" style="left:758px;top:740px;font-size:16px;line-height:18px;letter-spacing:4px">--</div>
<div class="a stl" style="left:879px;top:721px">实时课堂师生</div>
<div class="a sv" style="left:879px;top:742px;font-size:14px;line-height:16px">--</div>
<div class="a stl" style="left:1001px;top:721px">课堂到课率</div>
<div class="a sv" style="left:1001px;top:742px;font-size:14px;line-height:16px">--</div>
<div class="a" style="left:1152px;top:680px;width:200px;height:90px;background:#ecf3fd"></div>
<div class="a" style="left:1308px;top:680px;width:44px;height:18px;background:#4a8fea;color:#fff;font-size:14px;line-height:18px;text-align:center">live</div>
<svg class="a" style="left:1236px;top:715px" width="32" height="22" viewBox="0 0 32 22">
  <rect x="0" y="0" width="24" height="22" rx="2.5" fill="#a8c8f3"/>
  <path d="M24,8 L32,3 L32,19 L24,14 Z" fill="#a8c8f3"/>
  <path d="M9,6 L16.5,11 L9,16 Z" fill="#ecf3fd"/>
</svg>
<div class="a" style="left:1222px;top:752px;font-size:12px;line-height:14px;color:#999">正在播课程</div>

<!-- MAIN SCROLLBAR -->
<div class="a" style="left:1583px;top:60px;width:17px;height:697px;background:#f1f1f1"></div>
<svg class="a" style="left:1586px;top:65px" width="10" height="7" viewBox="0 0 10 7"><path d="M1.5,5.5 L5,1.5 L8.5,5.5 Z" fill="#a3a3a3"/></svg>
<div class="a" style="left:1585px;top:77px;width:13px;height:194px;background:#c1c1c1"></div>
<svg class="a" style="left:1586px;top:744px" width="10" height="7" viewBox="0 0 10 7"><path d="M1.5,1.5 L5,5.5 L8.5,1.5 Z" fill="#505050"/></svg>
<div class="a" style="left:1590px;top:228px;width:12px;height:59px;background:#3b3f4d;border:1px solid #5a5e6a;border-radius:3px"></div>
<div class="a" style="left:1592px;top:264px;width:2px;height:20px;background:repeating-linear-gradient(180deg,#4bb7d6 0 1.3px,transparent 1.3px 2.6px)"></div>
</body></html>
